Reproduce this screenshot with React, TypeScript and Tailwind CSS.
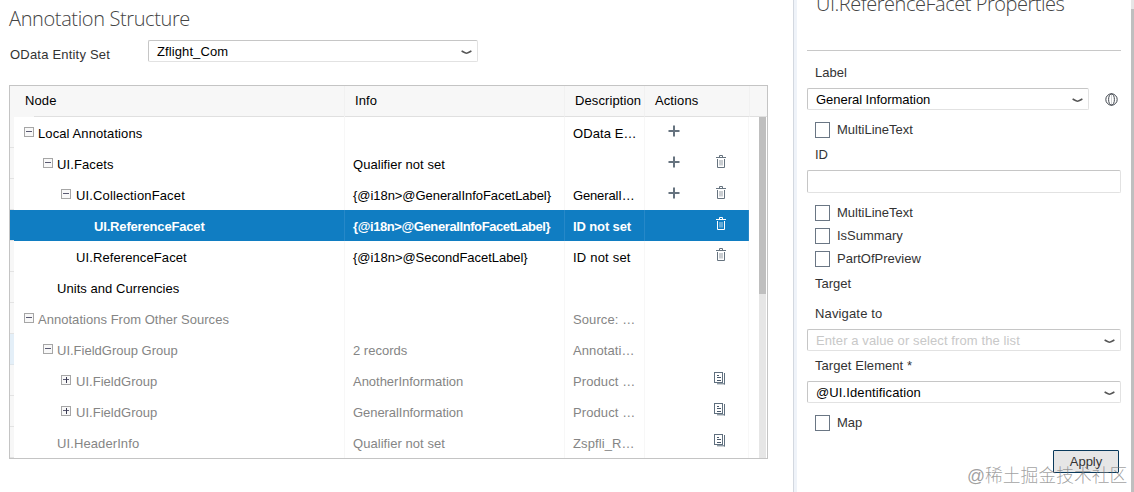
import type { ReactNode } from "react";

type Action = "delete" | "copy";

interface Row {
  label: string;
  indent: string;
  labelClass?: string;
  toggle?: "open" | "closed";
  info?: string;
  infoClass?: string;
  description?: string;
  descriptionClass?: string;
  add?: boolean;
  action?: Action;
  muted?: boolean;
  selected?: boolean;
}

const rows: Row[] = [
  { label: "Local Annotations", indent: "pl-[10px]", toggle: "open", description: "OData E…", add: true },
  { label: "UI.Facets", indent: "pl-[29px]", toggle: "open", info: "Qualifier not set", infoClass: "tracking-[0.05px]", add: true, action: "delete" },
  { label: "UI.CollectionFacet", indent: "pl-[47px]", labelClass: "pl-px tracking-[0.15px]", toggle: "open", info: "{@i18n>@GeneralInfoFacetLabel}", infoClass: "tracking-[-0.05px]", description: "GeneralI…", descriptionClass: "tracking-[-0.15px]", add: true, action: "delete" },
  { label: "UI.ReferenceFacet", indent: "pl-[80px]", labelClass: "tracking-[-0.17px]", info: "{@i18n>@GeneralInfoFacetLabel}", infoClass: "tracking-[-0.4px]", description: "ID not set", descriptionClass: "tracking-[-0.12px]", action: "delete", selected: true },
  { label: "UI.ReferenceFacet", indent: "pl-[62px]", info: "{@i18n>@SecondFacetLabel}", infoClass: "tracking-[-0.04px]", description: "ID not set", descriptionClass: "tracking-[0.2px]", action: "delete" },
  { label: "Units and Currencies", indent: "pl-[43px]", labelClass: "tracking-[0.05px]" },
  { label: "Annotations From Other Sources", indent: "pl-[10px]", labelClass: "tracking-[0.03px]", toggle: "open", description: "Source: …", muted: true },
  { label: "UI.FieldGroup Group", indent: "pl-[29px]", labelClass: "tracking-[0px]", toggle: "open", info: "2 records", infoClass: "tracking-[0px]", description: "Annotati…", muted: true },
  { label: "UI.FieldGroup", indent: "pl-[47px]", labelClass: "pl-px tracking-[0.03px]", toggle: "closed", info: "AnotherInformation", infoClass: "tracking-[-0.02px]", description: "Product …", action: "copy", muted: true },
  { label: "UI.FieldGroup", indent: "pl-[47px]", labelClass: "pl-px tracking-[0.03px]", toggle: "closed", info: "GeneralInformation", infoClass: "tracking-[-0.06px]", description: "Product …", action: "copy", muted: true },
  { label: "UI.HeaderInfo", indent: "pl-[43px]", info: "Qualifier not set", infoClass: "tracking-[0.05px]", description: "Zspfli_R…", action: "copy", muted: true },
];

function Toggle({ open }: { open: boolean }) {
  return (
    <svg width="11" height="10" viewBox="0 0 11 10" shapeRendering="crispEdges" className="mr-[3px] mb-px block shrink-0">
      <rect x="0.5" y="0.5" width="9" height="9" fill="#f8f8f8" stroke="#a6a6a6" />
      <path d="M2 4.5h6" stroke="#5a5a72" />
      {!open && <path d="M5 2v6" stroke="#3a3a52" />}
    </svg>
  );
}

function Plus() {
  return (
    <svg width="12" height="12" viewBox="0 0 12 12" className="block">
      <path d="M0.5 6h11M6 0.5v11" stroke="#66737f" strokeWidth="2" />
    </svg>
  );
}

function Trash() {
  return (
    <svg width="10" height="13" viewBox="0 0 10 13" className="block" fill="none" stroke="currentColor">
      <path d="M3.5 2V0.5h3V2M0 2.5h10" />
      <path d="M1.5 4v8.5h7V4" />
      <path d="M4 5v5.5M6 5v5.5" opacity="0.7" />
    </svg>
  );
}

function Copy() {
  return (
    <svg width="12" height="13" viewBox="0 0 12 13" className="block" fill="none" stroke="#5f6f7e">
      <rect x="0.5" y="0.5" width="8" height="10" />
      <path d="M3 3.5h2M3 5.5h4M3 8.5h4" stroke="#48586a" strokeWidth="1.2" />
      <path d="M10.5 1v11.5M3 11.8h8" />
    </svg>
  );
}

function Chevron() {
  return (
    <svg width="11" height="5" viewBox="0 0 11 5" className="block shrink-0" fill="none">
      <path d="M0.6 1C2.5 2 4 3.2 5.5 3.2S8.500 2 10.400 1" stroke="#555" strokeWidth="1.6" />
    </svg>
  );
}

function Globe() {
  return (
    <svg width="13" height="13" viewBox="0 0 13 13" className="block" fill="none" stroke="#40464e">
      <circle cx="6.500" cy="6.500" r="5.700" />
      <ellipse cx="6.500" cy="6.500" rx="2.900" ry="5.700" />
      <path d="M6.500 0.800v11.400" strokeOpacity="0.250" />
    </svg>
  );
}

function Field({ children, className, arrow = true }: { children?: ReactNode; className: string; arrow?: boolean }) {
  return (
    <div className={`flex items-center justify-between rounded-[2px] border border-[#e2e2e2] border-t-[#c6c6c6] border-l-[#c6c6c6] bg-white pr-[5px] pl-[8px] text-black ${className}`}>
      <span className="pt-[2px]">{children}</span>
      {arrow && <span className="pt-[3px]"><Chevron /></span>}
    </div>
  );
}

function Check({ label, className }: { label: string; className: string }) {
  return (
    <label className={`flex items-center pl-[8px] leading-[16px] ${className}`}>
      <span className="h-4 w-[15px] shrink-0 border border-[#6a7684] bg-white" />
      <span className="pl-[7px]">{label}</span>
    </label>
  );
}

function TreeRow({ row, index }: { row: Row; index: number }) {
  const tone = row.selected
    ? "bg-[#107dc2] font-bold text-white"
    : row.muted
      ? "text-[#858585] tracking-[0.1px]"
      : "text-black tracking-[0.1px]";
  const line = row.selected ? "border-[#2688c8]" : "border-[#f7f7f7]";
  const head = row.selected
    ? "bg-[#107dc2] border-[#e3e3e3]"
    : index === 7
      ? "bg-[#e4eff8] border-[#dde5eb]"
      : "bg-[#f7f7f7] border-[#e3e3e3]";
  return (
    <div className={`flex h-[31px] w-[739px] shrink-0 leading-[31px] ${tone}`}>
      <div className={`w-1 shrink-0 border-b ${head}`} />
      <div className={`flex w-[331px] shrink-0 items-center border-r ${line} ${row.indent}`}>
        {row.toggle && <Toggle open={row.toggle === "open"} />}
        <span className={`pt-[2px] leading-[29px] whitespace-nowrap ${row.labelClass ?? ""}`}>{row.label}</span>
      </div>
      <div className={`w-[220px] shrink-0 border-r pt-[2px] pl-[8px] leading-[29px] whitespace-nowrap ${line} ${row.infoClass ?? ""}`}>{row.info}</div>
      <div className={`w-[80px] shrink-0 border-r pt-[2px] pl-[8px] leading-[29px] whitespace-nowrap ${line} ${row.descriptionClass ?? ""}`}>{row.description}</div>
      <div className={`grid flex-1 grid-cols-[46px_1fr] border-r ${line}`}>
        <div className="pt-[8px] pl-[23px]">{row.add && <Plus />}</div>
        <div className="pt-[7px]">
          {row.action === "delete" && <div className={row.selected ? "pl-[25px] text-white" : "pl-[25px] text-[#66737f]"}><Trash /></div>}
          {row.action === "copy" && <div className="pl-[23px]"><Copy /></div>}
        </div>
      </div>
    </div>
  );
}

export default function App() {
  return (
    <div className="relative flex h-[492px] w-[1134px] overflow-hidden bg-white font-['Liberation_Sans',sans-serif] text-[13px] text-[#333]">
      <main className="flex w-[793px] shrink-0 flex-col pl-[9px]">
        <h1 className="h-[40px] pt-[5px] font-['Open_Sans',sans-serif] text-[20px] leading-[28px] font-light tracking-[-0.38px] text-[#444]">Annotation Structure</h1>
        <div className="flex h-[45px]">
          <label className="w-[139px] pt-[7px] pl-px leading-[16px] tracking-[0.2px]">OData Entity Set</label>
          <Field className="h-[22px] w-[330px] tracking-[0.1px]">Zflight_Com</Field>
        </div>
        <section className="flex h-[374px] w-[759px] flex-col overflow-hidden border border-[#c4c4c4]">
          <header className="flex h-[31px] shrink-0 bg-[#f7f7f7] leading-[29px] tracking-[0.1px] text-black">
            <div className="w-[15px]" />
            <div className="w-[320px] border-r border-[#f1f1f1]">
              <div className="ml-[9px] h-[31px] border-b border-[#e0e0e0]"><span className="-ml-[9px]">Node</span></div>
            </div>
            <div className="w-[220px] border-r border-b border-r-[#f1f1f1] border-b-[#e0e0e0] pl-[10px]">Info</div>
            <div className="w-[80px] border-r border-b border-r-[#f1f1f1] border-b-[#e0e0e0] pl-[10px]">Description</div>
            <div className="w-[105px] border-r border-b border-r-[#f1f1f1] border-b-[#e0e0e0] pl-[10px]">Actions</div>
            <div className="flex-1 border-b border-[#e0e0e0]" />
          </header>
          <div className="flex min-h-0 flex-1 justify-between">
            <div className="flex flex-col overflow-hidden">
              {rows.map((row, i) => <TreeRow key={i} row={row} index={i} />)}
            </div>
            <div className="mr-px w-[7px] bg-[#e6e6e6]">
              <div className="h-[177px] bg-[#bfbfbf]" />
            </div>
          </div>
        </section>
      </main>

      <aside className="flex flex-1 border-l border-[#d3d8e0]">
        <div className="w-[3px] bg-[#eff3f9]" />
        <div className="flex w-[334px] flex-col pl-[10px]">
          <h2 className="h-[51px] w-[314px] border-b border-[#c8c8c8] pl-[9px] font-['Open_Sans',sans-serif] text-[20px] font-light tracking-[-0.47px] text-[#444]">
            <span className="-mt-[10px] block leading-[28px]">UI.ReferenceFacet Properties</span>
          </h2>
          <div className="h-[37px] pt-[14px] pl-[8px] leading-[16px]">Label</div>
          <div className="flex items-center">
            <Field className="h-[22px] w-[282px]"><span className="tracking-[-0.03px]">General Information</span></Field>
            <span className="pt-px pl-[16px]"><Globe /></span>
          </div>
          <Check label="MultiLineText" className="mt-[12px]" />
          <div className="mt-[9px] pl-[8px] leading-[16px]">ID</div>
          <Field className="mt-[7px] h-[23px] w-[314px]" arrow={false} />
          <Check label="MultiLineText" className="mt-[12px]" />
          <Check label="IsSummary" className="mt-[7px]" />
          <Check label="PartOfPreview" className="mt-[7px]" />
          <div className="mt-[9px] pl-[8px] leading-[16px]">Target</div>
          <div className="mt-[14px] pl-[8px] leading-[16px] tracking-[0.15px]">Navigate to</div>
          <Field className="mt-[7px] h-[22px] w-[314px]"><span className="tracking-[0.1px] text-[#c8c8c8]">Enter a value or select from the list</span></Field>
          <div className="mt-[7px] pl-[8px] leading-[16px] tracking-[0.06px]">Target Element *</div>
          <Field className="mt-[7px] h-[22px] w-[314px]"><span className="tracking-[0.12px]">@UI.Identification</span></Field>
          <Check label="Map" className="mt-[12px]" />
          <button className="mt-[19px] ml-[246px] h-[23px] w-[66px] shrink-0 rounded-[1px] border border-[#0a3a5c] bg-[#e6e6e6] leading-[20px]">Apply</button>
        </div>
        <div className="ml-auto w-[3px] shrink-0 bg-[#e6e6e6] pt-[9px]">
          <div className="h-full bg-[#bfbfbf]" />
        </div>
      </aside>
      <div className="absolute top-[464px] left-[967px] font-['Liberation_Sans','Noto_Sans_CJK_SC',sans-serif] text-[17.8px] leading-[24px] font-light whitespace-nowrap text-[#777]/70">@稀土掘金技术社区</div>
    </div>
  );
}
